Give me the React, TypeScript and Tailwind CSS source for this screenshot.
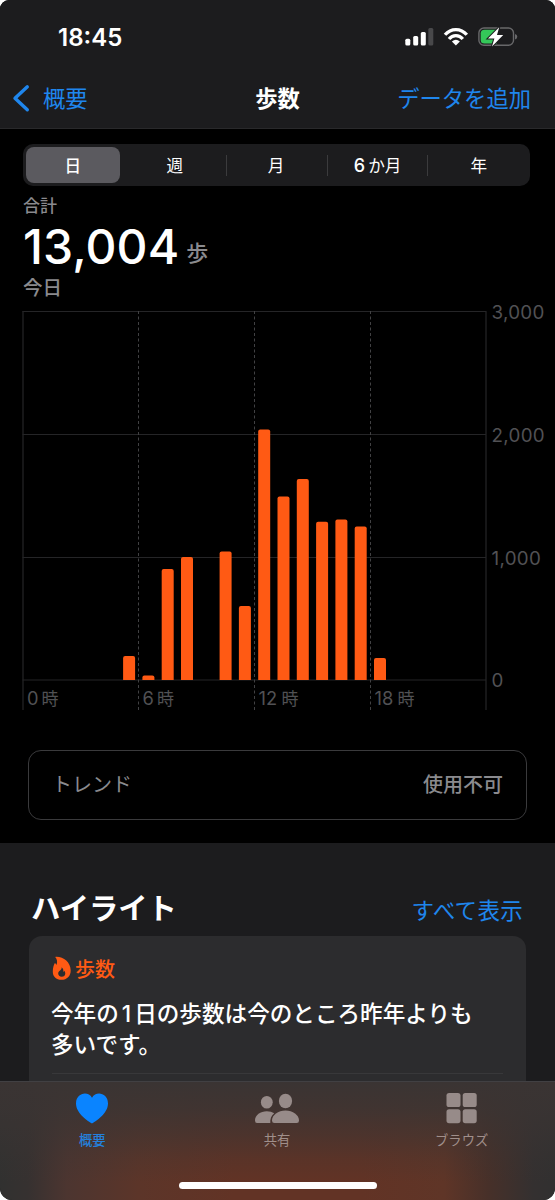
import React from "react";

const bars = [
  { hour: 5, top: 656 },
  { hour: 6, top: 675.5 },
  { hour: 7, top: 569 },
  { hour: 8, top: 557 },
  { hour: 10, top: 551.5 },
  { hour: 11, top: 606 },
  { hour: 12, top: 429.5 },
  { hour: 13, top: 496.5 },
  { hour: 14, top: 479 },
  { hour: 15, top: 521.8 },
  { hour: 16, top: 519.5 },
  { hour: 17, top: 526.5 },
  { hour: 18, top: 658 },
];

function StatusIcons() {
  return (
    <svg width="116" height="24" viewBox="402 25 116 24" className="block">
      <g fill="#fff">
        <rect x="405.3" y="38.7" width="5" height="6.8" rx="1.5" />
        <rect x="413.2" y="36" width="5" height="9.5" rx="1.5" />
        <rect x="420.8" y="32" width="5" height="13.5" rx="1.5" />
        <rect x="428.3" y="28" width="5" height="17.5" rx="1.5" fill="#48484a" />
      </g>
      <g fill="none" stroke="#fff" strokeWidth="3.3">
        <path d="M445 34.8 C451 27.8 460.8 27.8 466.8 34.8" />
        <path d="M449 39 C452.8 34.6 459 34.6 462.8 39" />
      </g>
      <path d="M451.9 41.4 Q455.9 38 459.9 41.4 L455.9 45.6 Z" fill="#fff" />
      <rect x="478.9" y="28" width="34.6" height="17.2" rx="5" fill="none" stroke="#68686a" strokeWidth="1.4" />
      <path d="M515 34 Q517.3 34.8 517.3 36.8 Q517.3 38.8 515 39.6 Z" fill="#68686a" />
      <path d="M484.5 29.8 H497 V43.5 H484.5 Q480.7 43.5 480.7 40 V33.3 Q480.7 29.8 484.5 29.8 Z" fill="#34c759" />
      <path d="M499.2 27.2 L488 38.4 H494.4 L492 46.6 L503.2 35 H497 Z" fill="#fff" stroke="#1c1c1e" strokeWidth="2" paintOrder="stroke" />
    </svg>
  );
}

function Header() {
  return (
    <header className="h-[129px] shrink-0 border-b border-[#29292b] bg-[#1c1c1e]">
      <div className="flex h-[74px] items-center justify-between pl-[58px] pr-[37px]">
        <span className="pt-[2px] text-[24px] font-semibold text-white">18:45</span>
        <StatusIcons />
      </div>
      <div className="grid h-[48px] grid-cols-3 items-center pl-[12px] pr-[24px] pt-px text-[22.3px] text-[#1f86ed]">
        <div className="flex items-center gap-[12px]">
          <svg width="19" height="30" viewBox="0 0 19 30" fill="none" stroke="#1f86ed" strokeWidth="3.4" strokeLinecap="round" strokeLinejoin="round">
            <path d="M15.3 2.8 L3 14.3 L15.3 25.8" />
          </svg>
          <span>概要</span>
        </div>
        <h1 className="pl-[12px] text-center font-bold text-white">歩数</h1>
        <span className="justify-self-end whitespace-nowrap">データを追加</span>
      </div>
    </header>
  );
}

function RangeTabs() {
  return (
    <div className="ml-[23px] mr-[25px] mt-[15px] grid h-[42px] grid-cols-5 rounded-[10px] bg-[#1c1c1e] p-[2px] text-[16.6px] text-white">
      <div className="my-px ml-px mr-[6px] flex items-center justify-center rounded-[8px] bg-[#5b5a5f] pt-[3px] font-medium">日</div>
      <div className="flex items-center justify-center pt-[3px] pr-[2px]">週</div>
      <div className="flex items-center"><i className="h-[21px] w-px bg-[#3b3b3d]" /><span className="flex-1 pt-[3px] pr-[2px] text-center">月</span></div>
      <div className="flex items-center"><i className="h-[21px] w-px bg-[#3b3b3d]" /><span className="flex-1 pt-[3px] text-center"><span className="pr-[3px] text-[18px] leading-none font-medium">6</span>か月</span></div>
      <div className="flex items-center"><i className="h-[21px] w-px bg-[#3b3b3d]" /><span className="flex-1 pt-[3px] pl-px text-center">年</span></div>
    </div>
  );
}

function StepChart() {
  return (
    <svg width="555" height="410" viewBox="0 304 555 410" className="block overflow-visible">
      <g stroke="#252527" strokeWidth="1.2">
        <path d="M22.5 311.5 H486 M22.5 434.5 H486 M22.5 557.5 H486 M22.5 680 H486" />
        <path d="M23 311 V710 M486 311 V710" />
      </g>
      <g stroke="#414143" strokeWidth="1" strokeDasharray="3 2.5">
        <path d="M138.5 311 V710 M254.5 311 V710 M370.5 311 V710" />
      </g>
      <g fill="#ff5a14">
        {bars.map((b) => {
          const x = 23 + b.hour * 19.3 + 3.6;
          return (
            <path
              key={b.hour}
              d={`M${x} 680 V${b.top + 2} Q${x} ${b.top} ${x + 2} ${b.top} H${x + 10} Q${x + 12} ${b.top} ${x + 12} ${b.top + 2} V680 Z`}
            />
          );
        })}
      </g>
      <g fill="#515154" fontSize="18.8" letterSpacing="0.3">
        <text x="491.5" y="318.5">3,000</text>
        <text x="491.5" y="441.5">2,000</text>
        <text x="491.5" y="564.5">1,000</text>
        <text x="491.5" y="687">0</text>
      </g>
      <g fill="#515154" fontSize="18.3">
        <text x="27" y="705">0<tspan x="41.5" fontSize="17">時</tspan></text>
        <text x="142.5" y="705">6<tspan x="157" fontSize="17">時</tspan></text>
        <text x="258.5" y="705">12<tspan x="281.5" fontSize="17">時</tspan></text>
        <text x="374.5" y="705">18<tspan x="397.5" fontSize="17">時</tspan></text>
      </g>
    </svg>
  );
}

function Highlights() {
  return (
    <section className="h-[238px] shrink-0 overflow-hidden bg-[#1c1c1e] px-[29px]">
      <div className="flex h-[93px] items-end justify-between pl-[2px] pr-[3px]">
        <h2 className="text-[29.3px] leading-[55px] font-bold text-white">ハイライト</h2>
        <span className="text-[22.5px] leading-[50px] tracking-[0.3px] text-[#1f86ed]">すべて表示</span>
      </div>
      <article className="h-[160px] rounded-t-[13px] bg-[#2c2c2e] px-[23px] pt-[19px]">
        <div className="flex h-[30px] items-center gap-[4px] text-[20px] font-medium text-[#ff5a14]">
          <svg width="19" height="24" viewBox="0 0 19 24" className="-mt-[4px] block">
            <path fill="#ff5a14" fillRule="evenodd" d="M3.2 .9 C11 .2 18.6 6 18.7 14.5 C18.8 20.2 14.8 23.8 9.5 23.8 C4.1 23.8 .7 20.4 .8 15.4 C.8 11.5 1.8 9.1 2.9 7.1 C3.6 7.6 4 8.2 4.4 9 C5.7 6.2 5.2 3.2 3.2 .9 Z M9.6 11.3 C10.2 14 6.2 14.9 6.2 17.6 C6.2 19.5 7.6 20.8 9.7 20.8 C11.8 20.8 13.3 19.5 13.3 17.5 C13.3 16.3 12.9 15.4 12.3 14.7 C12.1 15.3 11.8 15.6 11.3 15.8 C11.6 14 11.2 12.4 9.6 11.3 Z" />
          </svg>
          <span>歩数</span>
        </div>
        <p className="-ml-px mt-[13px] whitespace-nowrap text-[22.6px] leading-[31px] font-medium text-white">
          今年の<span className="pl-[3px] pr-[3px]">1</span>日の歩数は今のところ昨年よりも<br />多いです。
        </p>
        <hr className="mt-[13px] border-[#38383a]" />
      </article>
    </section>
  );
}

function TabBar() {
  return (
    <nav className="h-[119px] shrink-0 border-t border-[#414043] bg-[linear-gradient(to_bottom,#3a3433_0%,#3a3433d9_22%,#3a34338c_45%,#3a343333_66%,#3a343300_85%),linear-gradient(to_right,#313130_0%,#363130_5%,#4c3530_12%,#5c3529_25%,#623325_42%,#623325_65%,#5f3527_80%,#473029_88%,#343030_96%,#313030_100%)] text-[13.3px] text-[#a08f8b]">
      <div className="grid h-[72px] grid-cols-3 pr-px">
        <div className="flex flex-col items-center font-medium text-[#2480db]">
          <svg width="34" height="31" viewBox="75 1093 34 31" className="mt-[11px]">
            <path fill="#0a84ff" d="M92 1123.5 C88.5 1121.5 76 1113.5 76 1103.5 C76 1093 88 1090.5 92 1097.8 C96 1090.5 108 1093 108 1103.5 C108 1113.5 95.5 1121.5 92 1123.5 Z" />
          </svg>
          <span className="mt-[6px] leading-[20px]">概要</span>
        </div>
        <div className="flex flex-col items-center">
          <svg width="46" height="31" viewBox="254 1093 46 31" className="mt-[11px]" fill="#978b89">
            <ellipse cx="266.8" cy="1102.2" rx="5.9" ry="6.3" />
            <path d="M255 1120.5 C255 1115 260.5 1111.2 266.8 1111.2 C270 1111.2 272 1112 274.2 1113.2 C271.2 1115.6 270 1119 270.3 1123 H257 Q255 1123 255 1120.5 Z" />
            <ellipse cx="285.5" cy="1101" rx="6.6" ry="7.3" />
            <path d="M272 1120.5 C272 1115 278.2 1110.5 285.5 1110.5 C292.8 1110.5 299 1115 299 1120.5 Q299 1123 296.7 1123 H274.3 Q272 1123 272 1120.5 Z" />
          </svg>
          <span className="mt-[6px] leading-[20px]">共有</span>
        </div>
        <div className="flex flex-col items-center">
          <svg width="31" height="31" viewBox="446 1093 31 31" className="mt-[11px]" fill="#978b89">
            <rect x="446.5" y="1093" width="14" height="14" rx="2.6" />
            <rect x="462.7" y="1093" width="14" height="14" rx="2.6" />
            <rect x="446.5" y="1109.2" width="14" height="14" rx="2.6" />
            <rect x="462.7" y="1109.2" width="14" height="14" rx="2.6" />
          </svg>
          <span className="mt-[6px] leading-[20px]">ブラウズ</span>
        </div>
      </div>
      <div className="mx-auto mt-[28px] h-[7px] w-[198px] rounded-full bg-white" />
    </nav>
  );
}

export default function App() {
  return (
    <div className="h-[1200px] w-[555px] bg-white font-['Inter','Noto_Sans_CJK_JP',sans-serif]" lang="ja">
      <div className="flex h-full flex-col overflow-hidden rounded-t-[9px] rounded-b-[12px] bg-black">
        <Header />
        <main className="h-[714px] shrink-0 overflow-hidden">
          <RangeTabs />
          <div className="flex h-[118px] flex-col px-[23px] text-[#8a8a8e]">
            <div className="h-[37px] pt-px text-[17px] leading-[38px] font-medium">合計</div>
            <div className="flex h-[47px] items-end gap-[7px]">
              <span className="text-[48px] leading-[47px] font-medium tracking-[0.1px] text-white">13,004</span>
              <span className="text-[22px] leading-[33px] font-medium">歩</span>
            </div>
            <div className="h-[34px] pt-px text-[19.5px] leading-[34px] font-medium">今日</div>
          </div>
          <StepChart />
          <div className="mx-[28px] mt-[36px] flex h-[70px] items-center justify-between rounded-[13px] border border-[#3a3a3c] px-[23px] text-[20px] text-[#8a8a8e]">
            <span>トレンド</span>
            <span className="font-medium">使用不可</span>
          </div>
        </main>
        <Highlights />
        <TabBar />
      </div>
    </div>
  );
}
